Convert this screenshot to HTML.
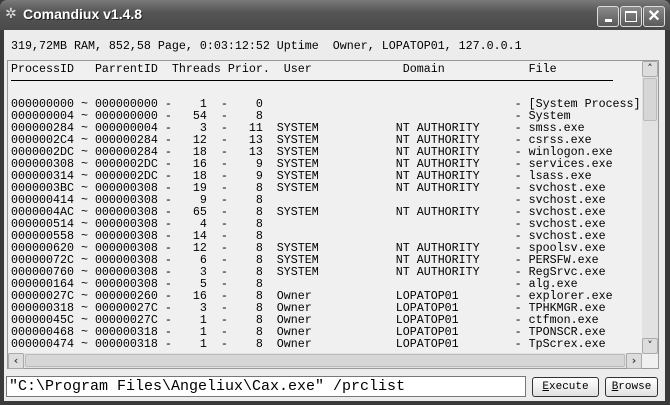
<!DOCTYPE html>
<html><head><style>
*{margin:0;padding:0;box-sizing:border-box}
body{width:670px;height:405px;overflow:hidden;background:#3a3a3a;position:relative;font-family:"Liberation Mono",monospace}
.title{position:absolute;left:0;top:0;width:670px;height:30px;background:linear-gradient(#7a7a7a,#555 40%,#4a4a4a);border-radius:7px 7px 0 0}
.ttl{position:absolute;left:23px;top:6px;color:#fff;font:bold 14px "Liberation Sans",sans-serif;text-shadow:1px 1px #222}
.ico{position:absolute;left:5px;top:6px;color:#ddd;font:14px "DejaVu Sans",sans-serif}
.btn{position:absolute;top:6px;width:22px;height:21px;border:1px solid #ddd;border-radius:3px;background:linear-gradient(#8a8a8a,#5a5a5a)}
.client{position:absolute;left:4px;top:30px;width:661px;height:371px;background:#ececec}
pre{font-family:"Liberation Mono",monospace;font-size:11.67px;line-height:12px;color:#000;position:absolute}
.list{position:absolute;left:7px;top:60px;width:652px;height:309px;background:#f0f0f0;border:1px solid #999}
.vs{position:absolute;right:0;top:0;width:16px;height:293px;background:#e2e2e2}
.hs{position:absolute;left:0;bottom:0;width:634px;height:15px;background:#e2e2e2}
.sb{position:absolute;width:16px;height:16px;border:1px solid #aaa;border-radius:2px;background:#ddd;font:bold 11px "DejaVu Sans";color:#444;text-align:center;line-height:14px}
.cmd{position:absolute;left:6px;top:376px;width:520px;height:21px;background:#fff;border:1px solid #777;font:15px "Liberation Mono",monospace;padding-left:2px;line-height:19px}
.b2{position:absolute;top:377px;height:20px;border:1px solid #333;border-radius:3px;background:linear-gradient(#fff,#e0e0e0);font:11px "Liberation Mono",monospace;text-align:center;line-height:18px}
</style></head><body>
<div class="title"><span class="ico">✲</span><span class="ttl">Comandiux v1.4.8</span>
<div class="btn" style="left:597px"><div style="position:absolute;left:7px;top:12px;width:7px;height:3px;background:#fff"></div></div>
<div class="btn" style="left:620px"><div style="position:absolute;left:4px;top:4px;width:12px;height:11px;border:1px solid #fff;border-top-width:2px"></div></div>
<div class="btn" style="left:643px;color:#fff;font:bold 16px 'Liberation Sans';text-align:center;line-height:19px">✕</div>
</div>
<div class="client"></div>
<pre style="left:11px;top:40px">319,72MB RAM, 852,58 Page, 0:03:12:52 Uptime  Owner, LOPATOP01, 127.0.0.1</pre>
<div class="list">
<div style="position:absolute;left:3px;top:19px;width:602px;height:1px;background:#000"></div>
<div class="vs"><div class="sb" style="top:0;left:0">&#708;</div><div style="position:absolute;left:1px;top:17px;width:14px;height:43px;background:#d6d6d6;border:1px solid #bbb;border-radius:2px"></div><div class="sb" style="bottom:0;left:0">&#709;</div></div>
<div class="hs"><div class="sb" style="left:0;top:0">&lsaquo;</div><div style="position:absolute;left:17px;top:1px;width:600px;height:13px;background:#d6d6d6;border:1px solid #bbb;border-radius:2px"></div><div class="sb" style="right:0;top:0">&rsaquo;</div></div>
</div>
<pre style="left:11px;top:63px">ProcessID   ParrentID  Threads Prior.  User             Domain            File</pre>
<pre style="left:11px;top:98px">000000000 ~ 000000000 -    1  -    0                                    - [System Process]
000000004 ~ 000000000 -   54  -    8                                    - System
000000284 ~ 000000004 -    3  -   11  SYSTEM           NT AUTHORITY     - smss.exe
0000002C4 ~ 000000284 -   12  -   13  SYSTEM           NT AUTHORITY     - csrss.exe
0000002DC ~ 000000284 -   18  -   13  SYSTEM           NT AUTHORITY     - winlogon.exe
000000308 ~ 0000002DC -   16  -    9  SYSTEM           NT AUTHORITY     - services.exe
000000314 ~ 0000002DC -   18  -    9  SYSTEM           NT AUTHORITY     - lsass.exe
0000003BC ~ 000000308 -   19  -    8  SYSTEM           NT AUTHORITY     - svchost.exe
000000414 ~ 000000308 -    9  -    8                                    - svchost.exe
0000004AC ~ 000000308 -   65  -    8  SYSTEM           NT AUTHORITY     - svchost.exe
000000514 ~ 000000308 -    4  -    8                                    - svchost.exe
000000558 ~ 000000308 -   14  -    8                                    - svchost.exe
000000620 ~ 000000308 -   12  -    8  SYSTEM           NT AUTHORITY     - spoolsv.exe
00000072C ~ 000000308 -    6  -    8  SYSTEM           NT AUTHORITY     - PERSFW.exe
000000760 ~ 000000308 -    3  -    8  SYSTEM           NT AUTHORITY     - RegSrvc.exe
000000164 ~ 000000308 -    5  -    8                                    - alg.exe
00000027C ~ 000000260 -   16  -    8  Owner            LOPATOP01        - explorer.exe
000000318 ~ 00000027C -    3  -    8  Owner            LOPATOP01        - TPHKMGR.exe
00000045C ~ 00000027C -    1  -    8  Owner            LOPATOP01        - ctfmon.exe
000000468 ~ 000000318 -    1  -    8  Owner            LOPATOP01        - TPONSCR.exe
000000474 ~ 000000318 -    1  -    8  Owner            LOPATOP01        - TpScrex.exe</pre>
<div class="cmd">"C:\Program Files\Angeliux\Cax.exe" /prclist</div>
<div class="b2" style="left:532px;width:67px"><u>E</u>xecute</div>
<div class="b2" style="left:605px;width:53px"><u>B</u>rowse</div>
</body></html>
